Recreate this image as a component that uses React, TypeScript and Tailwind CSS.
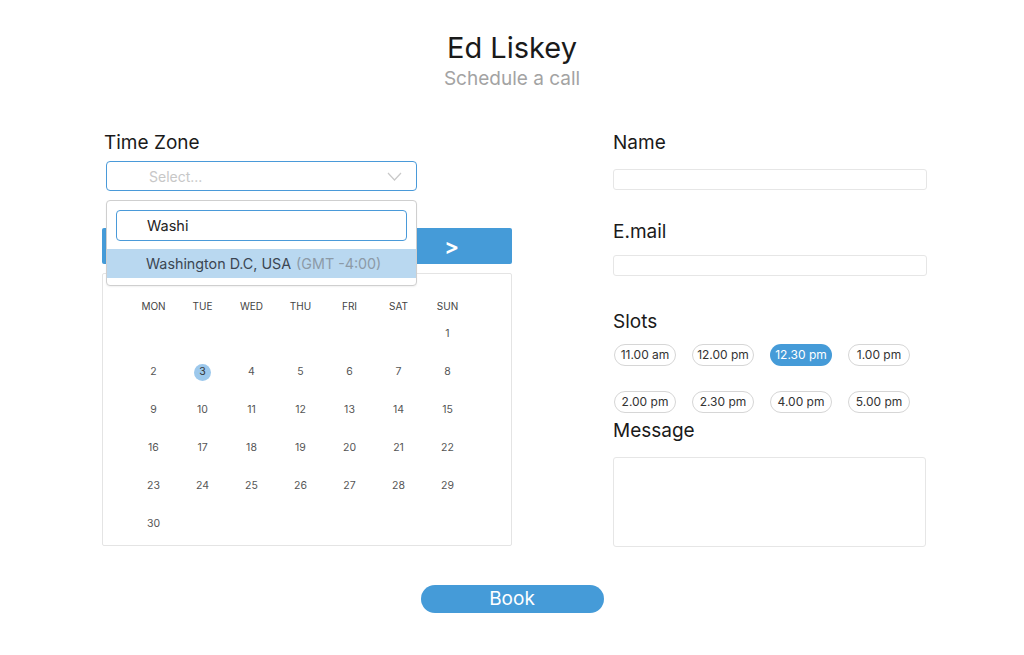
import { useState } from "react"

const days = ["MON", "TUE", "WED", "THU", "FRI", "SAT", "SUN"]
const slots = ["11.00 am", "12.00 pm", "12.30 pm", "1.00 pm", "2.00 pm", "2.30 pm", "4.00 pm", "5.00 pm"]

// June starting on a Sunday
const cells: (number | null)[] = [...Array(6).fill(null), ...Array.from({ length: 30 }, (_, i) => i + 1)]
const weeks: (number | null)[][] = []
for (let i = 0; i < cells.length; i += 7) weeks.push(cells.slice(i, i + 7))

function Chevron() {
  return (
    <svg width="15" height="9" viewBox="0 0 15 9" fill="none">
      <path d="M1 1l6.5 7L14 1" stroke="#c9c9c9" strokeWidth="1.2" />
    </svg>
  )
}

function Calendar({ selected }: { selected: number }) {
  return (
    <div className="mt-[9px] h-[273px] w-[410px] rounded-[2px] border border-[#e4e4e4] pl-[26px] pt-[23px]">
      <div className="grid h-[18px] grid-cols-[repeat(7,49px)] items-center">
        {days.map((d) => (
          <div key={d} className="text-center text-[10px] text-[#444]">
            {d}
          </div>
        ))}
      </div>
      {weeks.map((week, wi) => (
        <div key={wi} className="grid h-[38px] grid-cols-[repeat(7,49px)] items-center">
          {week.map((n, di) => (
            <div key={di} className="flex justify-center">
              {n && (
                <span
                  className={
                    n === selected
                      ? "flex h-[17px] w-[17px] items-center justify-center rounded-full bg-[#9cc8ec] text-[10.5px] text-[#333]"
                      : "text-[10.5px] text-[#555]"
                  }
                >
                  {n}
                </span>
              )}
            </div>
          ))}
        </div>
      ))}
    </div>
  )
}

export default function App() {
  const [slot, setSlot] = useState("12.30 pm")

  return (
    <div className="min-h-[655px] w-full bg-white pt-[30px] font-['Inter',sans-serif] text-[#1a1a1a]">
      <div className="text-center">
        <h1 className="text-[29px] leading-[36px]">Ed Liskey</h1>
        <p className="text-[19px] leading-[26px] text-[#a3a3a3]">Schedule a call</p>
      </div>

      <div className="ml-[102px] mt-[39px] flex gap-[101px]">
        {/* left column */}
        <div className="relative w-[410px]">
          <label className="block pl-[2px] text-[19px] leading-[24px]">Time Zone</label>
          <div className="ml-[4px] mt-[6px] flex h-[30px] w-[311px] items-center justify-between rounded-[4px] border border-[#4a9ad9] pl-[42px] pr-[14px]">
            <span className="text-[14px] text-[#c7c7c7]">Select...</span>
            <Chevron />
          </div>

          <div className="mt-[37px] flex h-[36px] w-[410px] items-center justify-end rounded-[2px] bg-[#459bd8] pr-[53px] text-[22px] font-semibold text-white">
            <span>&gt;</span>
          </div>

          <Calendar selected={3} />

          {/* time zone dropdown */}
          <div className="absolute left-[4px] top-[69px] w-[311px] overflow-hidden rounded-[4px] border border-[#cfcfcf] bg-white pb-[7px] pt-[9px] shadow-[0_1px_2px_rgba(0,0,0,0.06)]">
            <div className="mx-[9px] flex h-[31px] items-center rounded-[4px] border border-[#4a9ad9] pl-[30px] text-[14.5px] text-[#222]">
              Washi
            </div>
            <div className="mt-[8px] flex h-[29px] items-center bg-[#b9d8f0] pl-[39px] text-[14.3px] text-[#3b4652]">
              Washington D.C, USA
              <span className="ml-[5px] text-[#8c9aa7]">(GMT -4:00)</span>
            </div>
          </div>
        </div>

        {/* right column */}
        <div className="w-[314px]">
          <label className="block text-[19px] leading-[24px]">Name</label>
          <input className="mt-[14px] block h-[21px] w-[314px] rounded-[3px] border border-[#e6e6e6] outline-none" />

          <label className="mt-[30px] block text-[19px] leading-[24px]">E.mail</label>
          <input className="mt-[11px] block h-[21px] w-[314px] rounded-[3px] border border-[#e6e6e6] outline-none" />

          <label className="mt-[34px] block text-[19px] leading-[24px]">Slots</label>
          <div className="mt-[10px] grid grid-cols-[repeat(4,62px)] gap-x-[16px] gap-y-[25px] pl-[1px]">
            {slots.map((s) => (
              <button
                key={s}
                onClick={() => setSlot(s)}
                className={
                  s === slot
                    ? "h-[22px] rounded-full bg-[#459bd8] text-[12px] text-white"
                    : "h-[22px] rounded-full border border-[#d6d6d6] text-[12px] text-[#333]"
                }
              >
                {s}
              </button>
            ))}
          </div>

          <label className="mt-[6px] block text-[19px] leading-[24px]">Message</label>
          <textarea className="mt-[14px] block h-[90px] w-[313px] resize-none rounded-[3px] border border-[#e6e6e6] outline-none" />
        </div>
      </div>

      <div className="mt-[38px] flex justify-center">
        <button className="h-[28px] w-[183px] rounded-full bg-[#459bd8] text-[19px] leading-[28px] text-white">
          Book
        </button>
      </div>
    </div>
  )
}
